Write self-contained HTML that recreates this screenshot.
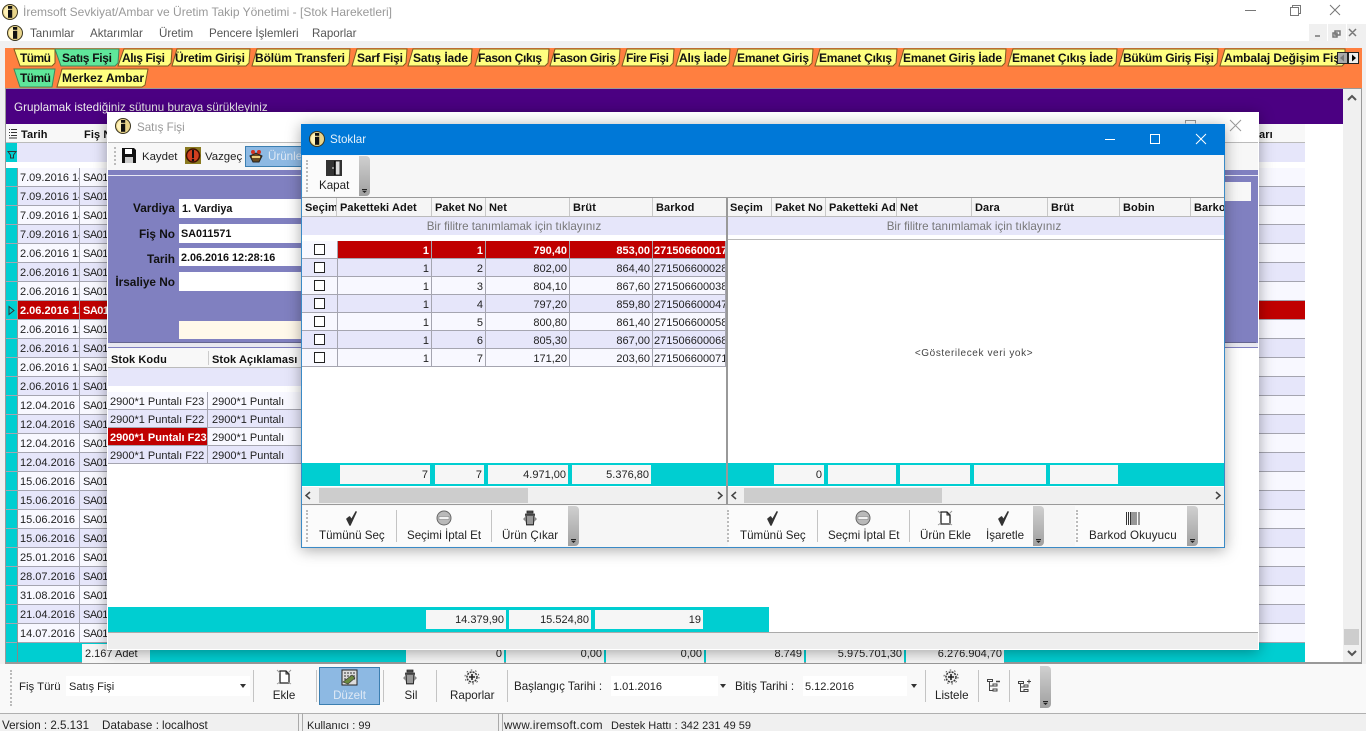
<!DOCTYPE html>
<html lang="tr"><head><meta charset="utf-8"><title>İremsoft</title>
<style>
html,body{margin:0;padding:0;width:1366px;height:731px;overflow:hidden;background:#fff}
body{position:relative;font:11.6px/14px "Liberation Sans",sans-serif;color:#222}
div,svg,span.t{position:absolute}
.t{white-space:nowrap;margin-top:1px}
.b{font-weight:bold;color:#111;font-size:11px;letter-spacing:.1px}
.lb{font-size:11.8px;letter-spacing:0}
.r{text-align:right}
.c{text-align:center}
.row{left:6px;width:1299px;height:18px;border-bottom:1px solid #a5a5b0;background:#f8f8ff;font-size:11px}
.sr{height:17px;border-bottom:1px solid #a5a5b0;background:#f8f8ff;line-height:20px;overflow:hidden;white-space:nowrap;font-size:11px}
.sr .t{margin-top:0}
.alt{background:#e6e6fa}
.red{background:#c00000;color:#fff;font-weight:bold}
.ind{left:0;top:0;width:11px;height:18px;background:#00ced1;border-right:1px solid #999}
.d{left:12px;top:0;height:18px;border-right:1px solid #a5a5b0;overflow:hidden;padding-left:2px;line-height:20px;width:59px;white-space:nowrap}
.f{left:75px;top:0;padding-left:2px;line-height:20px;white-space:nowrap;letter-spacing:-.5px}
.cell{top:0;height:17px;border-right:1px solid #a5a5b0;overflow:hidden;line-height:20px;white-space:nowrap;box-sizing:border-box}
.n{text-align:right;padding-right:2px}
.fld{background:#f6f6f6;height:19px;line-height:21px;text-align:right;box-sizing:border-box;padding-right:2px;font-size:11px}
.gh{top:0;height:18px;background:#f5f5f5;border-right:1px solid #c8c8c8;font-weight:bold;font-size:11px;color:#111;line-height:20px;padding-left:3px;box-sizing:border-box;overflow:hidden;white-space:nowrap;letter-spacing:.1px}
.sep{width:1px;background:#c4c4c4}
.grip{width:11px;background:linear-gradient(#d0d0d0,#a0a0a0);border-radius:0 4px 4px 0}
.grip:after{content:"";position:absolute;left:3px;bottom:3px;width:5px;height:4px;background:#222;clip-path:polygon(0 0,100% 0,100% 25%,0 25%,0 45%,100% 45%,50% 100%,0 45%)}
.dots{width:0;border-left:2px dotted #bbb}
.shot{box-shadow:0 2px 14px rgba(0,0,0,.35)}
.cb{left:12px;top:3px;width:9px;height:9px;border:1.5px solid #222;background:#fff}
.ff{left:179px;width:122px;background:#fff;box-sizing:border-box;font-size:10.8px;letter-spacing:0;white-space:nowrap}
</style></head><body>
<svg width="0" height="0" style="left:0;top:0"><defs>
<g id="logo"><circle cx="8" cy="8" r="7.5" fill="#e8d48a" stroke="#3a3520"/><path d="M2 8a6 6 0 0 1 6-6v12a6 6 0 0 1-6-6z" fill="#fff2b8"/><rect x="6" y="2" width="4.2" height="2.8" fill="#111"/><rect x="6" y="5.8" width="4.2" height="8" fill="#111"/></g>
<g id="chk"><path d="M3 8l3 6 6-13-4.5 8L5.5 6z" fill="#333" stroke="#333" stroke-width="1.6" stroke-linejoin="round"/></g>
<g id="stop"><circle cx="8" cy="8" r="7" fill="#b9b9b9" stroke="#666"/><rect x="3" y="6.5" width="10" height="3" fill="#f2f2f2" stroke="#777" stroke-width=".5"/></g>
<g id="trash"><path d="M5 1h6v2H5zM3.500 4h9l-1 11h-7z" fill="#555" stroke="#222" stroke-width=".8"/><path d="M6 6v8M8 6v8M10 6v8" stroke="#ddd"/><path d="M1 9l3-3v6zM15 9l-3-3v6z" fill="#888"/></g>
<g id="new"><path d="M4 2h6l3 3v9H4z" fill="#fff" stroke="#222" stroke-width="1.3"/><path d="M10 2v3h3" fill="none" stroke="#222"/><path d="M1 1l3 3M15 1l-3 3M1 15l3-2M15 15l-3-2" stroke="#999"/></g>
<g id="gear"><circle cx="8" cy="8" r="5" fill="#eee" stroke="#333" stroke-width="1.5" stroke-dasharray="2 1"/><path d="M8 5v6M5 8h6" stroke="#222" stroke-width="1.6"/><circle cx="8" cy="8" r="7" fill="none" stroke="#555" stroke-dasharray="1.5 3"/></g>
</defs></svg>

<!-- title bar -->
<svg style="left:2px;top:4px" width="16" height="16"><use href="#logo"/></svg>
<span class="t" style="left:23px;top:4px;color:#999;font-size:12px">İremsoft Sevkiyat/Ambar ve Üretim Takip Yönetimi - [Stok Hareketleri]</span>
<svg style="left:1240px;top:0" width="126" height="22" fill="none" stroke="#777"><path d="M5 10.5h11M50.500 7.500h8v8h-8zM52.500 7.500v-2h8v8h-2"/><path d="M90 5l10 10M100 5l-10 10"/></svg>
<!-- menu -->
<svg style="left:7px;top:25px" width="16" height="16"><use href="#logo"/></svg>
<span class="t" style="left:30px;top:26px;color:#555">Tanımlar</span>
<span class="t" style="left:90px;top:26px;color:#555">Aktarımlar</span>
<span class="t" style="left:159px;top:26px;color:#555">Üretim</span>
<span class="t" style="left:209px;top:26px;color:#555">Pencere İşlemleri</span>
<span class="t" style="left:312px;top:26px;color:#555">Raporlar</span>
<div style="left:1309px;top:24px;width:18px;height:17px;background:#f0f0f0"></div>
<div style="left:1328px;top:24px;width:18px;height:17px;background:#f0f0f0"></div>
<div style="left:1347px;top:24px;width:19px;height:17px;background:#f0f0f0"></div>
<svg style="left:1309px;top:24px" width="57" height="17" fill="none" stroke="#777" stroke-width="1.5"><path d="M6 12h5M26 7h5v4h-5zM24 9h4v4h-4zM40 5l7 7M47 5l-7 7"/></svg>
<div style="left:0;top:41px;width:1366px;height:7px;background:#f0f0f0"></div>
<div style="left:0;top:48px;width:5px;height:616px;background:#f0f0f0"></div>
<div style="left:1362px;top:48px;width:4px;height:616px;background:#f0f0f0"></div>

<!-- tab strip -->
<div style="left:5px;top:48px;width:1357px;height:41px;background:#ff7f40;border-bottom:1px solid #999;box-sizing:border-box"></div>
<svg style="left:0;top:48px" width="1366" height="42" font-family="Liberation Sans" font-size="12" font-weight="bold" fill="#111">
<g stroke="#7a5a20" fill="#ffff80">
<polygon points="14,1 55,1 55,15 52,18 20,18"/>
<polygon points="55,1 119,1 118,15 115,18 61,18" fill="#5fe79a" stroke="#3e8a5e"/>
<polygon points="124,1 172,1 171,15 168,18 118,18"/>
<polygon points="177,1 250,1 249,15 246,18 172,18"/>
<polygon points="257,1 350,1 349,15 346,18 252,18"/>
<polygon points="357,1 407,1 406,15 403,18 352,18"/>
<polygon points="413,1 472,1 471,15 468,18 408,18"/>
<polygon points="480,1 549,1 548,15 545,18 475,18"/>
<polygon points="555,1 620,1 619,15 616,18 550,18"/>
<polygon points="627,1 674,1 673,15 670,18 622,18"/>
<polygon points="681,1 730,1 729,15 726,18 676,18"/>
<polygon points="738,1 813,1 812,15 809,18 733,18"/>
<polygon points="820,1 897,1 896,15 893,18 815,18"/>
<polygon points="904,1 1006,1 1005,15 1002,18 899,18"/>
<polygon points="1013,1 1117,1 1116,15 1113,18 1008,18"/>
<polygon points="1124,1 1218,1 1217,15 1214,18 1119,18"/>
<polygon points="1225,1 1345,1 1345,15 1342,18 1220,18"/>
<polygon points="14,21 55,21 52,39 20,39" fill="#5fe79a" stroke="#3e8a5e"/>
<polygon points="62,21 148,21 145,37 142,39 57,39"/>
</g>
<text x="20" y="14" textLength="31">Tümü</text>
<text x="62" y="14" textLength="50">Satış Fişi</text>
<text x="122" y="14" textLength="43">Alış Fişi</text>
<text x="175" y="14" textLength="70">Üretim Girişi</text>
<text x="255" y="14" textLength="90">Bölüm Transferi</text>
<text x="357" y="14" textLength="46">Sarf Fişi</text>
<text x="413" y="14" textLength="55">Satış İade</text>
<text x="478" y="14" textLength="64">Fason Çıkış</text>
<text x="553" y="14" textLength="63">Fason Giriş</text>
<text x="626" y="14" textLength="43">Fire Fişi</text>
<text x="679" y="14" textLength="48">Alış İade</text>
<text x="737" y="14" textLength="72">Emanet Giriş</text>
<text x="819" y="14" textLength="73">Emanet Çıkış</text>
<text x="903" y="14" textLength="99">Emanet Giriş İade</text>
<text x="1012" y="14" textLength="101">Emanet Çıkış İade</text>
<text x="1123" y="14" textLength="91">Büküm Giriş Fişi</text>
<text x="1224" y="14" textLength="116">Ambalaj Değişim Fiş</text>
<text x="20" y="34" textLength="31">Tümü</text>
<text x="62" y="34" textLength="82">Merkez Ambar</text>
<rect x="1337.5" y="4.5" width="10" height="11" fill="#aaa" stroke="#222"/><path d="M1340 10l4-3.500v7z" fill="#777"/>
<rect x="1348.5" y="4.500" width="10" height="11" fill="#eee" stroke="#222"/><path d="M1356 10l-4-3.500v7z" fill="#000"/>
</svg>

<!-- main grid area -->
<div style="left:5px;top:89px;width:1357px;height:575px;background:#fff;border-right:1px solid #999;border-left:1px solid #999;border-bottom:2px solid #999;box-sizing:border-box"></div>
<div style="left:6px;top:89px;width:1337px;height:35px;background:#4b0082"></div>
<span class="t" style="left:14px;top:100px;color:#eee;letter-spacing:.05px">Gruplamak istediğiniz sütunu buraya sürükleyiniz</span>
<div style="left:1343px;top:89px;width:18px;height:573px;background:#f0f0f0"></div>
<div style="left:1344px;top:629px;width:15px;height:16px;background:#cdcdcd"></div>
<svg style="left:1343px;top:89px" width="18" height="573" fill="none" stroke="#555" stroke-width="2"><path d="M5 11l4-4 4 4M5 562l4 4 4-4"/></svg>
<div style="left:6px;top:124px;width:1299px;height:19px;background:#f8f8f8;border-bottom:1px solid #bbb;box-sizing:border-box"></div>
<span class="t b" style="left:21px;top:127px">Tarih</span>
<span class="t b" style="left:84px;top:127px">Fiş N</span>
<svg style="left:8px;top:128px" width="9" height="11" stroke="#333"><path d="M1 1.500h1M1 4.500h1M1 7.500h1M3 1.500h6M3 4.500h6M3 7.500h6M1 10h8"/></svg>
<span class="t b" style="left:1259px;top:127px">arı</span>
<div style="left:6px;top:143px;width:1299px;height:19px;background:#e6e6fa"></div>
<div style="left:6px;top:143px;width:11px;height:19px;background:#00ced1"></div>
<svg style="left:7px;top:150px" width="10" height="11" fill="none" stroke="#333"><path d="M1 1.500h8L6.500 5v3h-3V5z"/></svg>

<div class="row" style="top:168px"><div class="ind"></div><div class="d">7.09.2016 14</div><div class="f">SA01</div></div>
<div class="row alt" style="top:187px"><div class="ind"></div><div class="d">7.09.2016 14</div><div class="f">SA01</div></div>
<div class="row" style="top:206px"><div class="ind"></div><div class="d">7.09.2016 14</div><div class="f">SA01</div></div>
<div class="row alt" style="top:225px"><div class="ind"></div><div class="d">7.09.2016 14</div><div class="f">SA01</div></div>
<div class="row" style="top:244px"><div class="ind"></div><div class="d">2.06.2016 12</div><div class="f">SA01</div></div>
<div class="row alt" style="top:263px"><div class="ind"></div><div class="d">2.06.2016 12</div><div class="f">SA01</div></div>
<div class="row" style="top:282px"><div class="ind"></div><div class="d">2.06.2016 12</div><div class="f">SA01</div></div>
<div class="row red" style="top:301px"><div class="ind"></div><div class="d">2.06.2016 12</div><div class="f">SA01</div></div>
<div class="row" style="top:320px"><div class="ind"></div><div class="d">2.06.2016 12</div><div class="f">SA01</div></div>
<div class="row alt" style="top:339px"><div class="ind"></div><div class="d">2.06.2016 12</div><div class="f">SA01</div></div>
<div class="row" style="top:358px"><div class="ind"></div><div class="d">2.06.2016 12</div><div class="f">SA01</div></div>
<div class="row alt" style="top:377px"><div class="ind"></div><div class="d">2.06.2016 12</div><div class="f">SA01</div></div>
<div class="row" style="top:396px"><div class="ind"></div><div class="d">12.04.2016</div><div class="f">SA01</div></div>
<div class="row alt" style="top:415px"><div class="ind"></div><div class="d">12.04.2016</div><div class="f">SA01</div></div>
<div class="row" style="top:434px"><div class="ind"></div><div class="d">12.04.2016</div><div class="f">SA01</div></div>
<div class="row alt" style="top:453px"><div class="ind"></div><div class="d">12.04.2016</div><div class="f">SA01</div></div>
<div class="row" style="top:472px"><div class="ind"></div><div class="d">15.06.2016</div><div class="f">SA01</div></div>
<div class="row alt" style="top:491px"><div class="ind"></div><div class="d">15.06.2016</div><div class="f">SA01</div></div>
<div class="row" style="top:510px"><div class="ind"></div><div class="d">15.06.2016</div><div class="f">SA01</div></div>
<div class="row alt" style="top:529px"><div class="ind"></div><div class="d">15.06.2016</div><div class="f">SA01</div></div>
<div class="row" style="top:548px"><div class="ind"></div><div class="d">25.01.2016</div><div class="f">SA01</div></div>
<div class="row alt" style="top:567px"><div class="ind"></div><div class="d">28.07.2016</div><div class="f">SA01</div></div>
<div class="row" style="top:586px"><div class="ind"></div><div class="d">31.08.2016</div><div class="f">SA01</div></div>
<div class="row alt" style="top:605px"><div class="ind"></div><div class="d">21.04.2016</div><div class="f">SA01</div></div>
<div class="row" style="top:624px"><div class="ind"></div><div class="d">14.07.2016</div><div class="f">SA01</div></div>
<svg style="left:7px;top:305px" width="9" height="11" fill="none" stroke="#333"><path d="M2 1.500l5 4-5 4z"/></svg>
<div style="left:1258px;top:168px;width:1px;height:474px;background:#a5a5b0"></div>

<!-- main footer -->
<div style="left:6px;top:643px;width:1299px;height:19px;background:#00ced1"></div>
<div style="left:17px;top:642px;width:1px;height:20px;background:#888"></div>
<div class="fld" style="left:82px;top:644px;width:68px;text-align:left;padding-left:3px">2.167 Adet</div>
<div class="fld" style="left:406px;top:644px;width:98px">0</div>
<div class="fld" style="left:506px;top:644px;width:98px">0,00</div>
<div class="fld" style="left:606px;top:644px;width:98px">0,00</div>
<div class="fld" style="left:706px;top:644px;width:98px">8.749</div>
<div class="fld" style="left:806px;top:644px;width:98px">5.975.701,30</div>
<div class="fld" style="left:906px;top:644px;width:98px">6.276.904,70</div>

<!-- Satış Fişi window -->
<div class="shot" style="left:107px;top:112px;width:1152px;height:538px;background:#fff"></div>
<svg style="left:115px;top:118px" width="16" height="16"><use href="#logo"/></svg>
<span class="t" style="left:137px;top:120px;color:#999">Satış Fişi</span>
<svg style="left:1180px;top:115px" width="70" height="22" fill="none" stroke="#999"><path d="M5.500 8.500v-3h10v3"/><path d="M50 5l11 11M61 5L50 16"/></svg>
<div style="left:108px;top:142px;width:1150px;height:1px;background:#bbb"></div>
<div style="left:108px;top:143px;width:1150px;height:27px;background:#f7f7f7"></div>
<div class="dots" style="left:114px;top:147px;height:18px"></div>
<svg style="left:121px;top:147px" width="16" height="17"><path d="M1 1h12l2 2v13H1z" fill="#111"/><rect x="4" y="2" width="7" height="5" fill="#fff"/><rect x="4" y="10" width="8" height="6" fill="#ccc"/></svg>
<span class="t" style="left:142px;top:149px;font-size:11.4px">Kaydet</span>
<svg style="left:185px;top:147px" width="16" height="17"><rect width="16" height="17" fill="#8a7a20"/><circle cx="8" cy="8.500" r="6.500" fill="#d04020" stroke="#401000" stroke-width="1.500"/><path d="M8 3v8" stroke="#111" stroke-width="2"/><circle cx="8" cy="13" r="1.300" fill="#111"/></svg>
<span class="t" style="left:205px;top:149px;font-size:11.4px">Vazgeç</span>
<div style="left:245px;top:146px;width:60px;height:21px;background:#8db9e3;border:1px solid #3c7fb1;box-sizing:border-box"></div>
<svg style="left:248px;top:148px" width="16" height="16"><path d="M2 8l6-3 6 3-3 6H5z" fill="#6a4a20" stroke="#222"/><circle cx="5" cy="4" r="2" fill="#d03020"/><circle cx="11" cy="4" r="2" fill="#d03020"/><path d="M4 8h8v2H4z" fill="#eed080"/></svg>
<span class="t" style="left:268px;top:149px;color:#dfe9f5">Ürünler</span>
<div style="left:108px;top:170px;width:1150px;height:178px;background:#8080c0"></div>
<div style="left:108px;top:175px;width:1150px;height:1px;background:#e8e8f4"></div>
<div style="left:110px;top:342px;width:1146px;height:1px;background:#666690"></div>
<div style="left:108px;top:343px;width:1150px;height:4px;background:#e8e8f0"></div>
<span class="t b lb r" style="left:115px;top:200px;width:60px">Vardiya</span>
<span class="t b lb r" style="left:115px;top:226px;width:60px">Fiş No</span>
<span class="t b lb r" style="left:115px;top:251px;width:60px">Tarih</span>
<span class="t b lb r" style="left:105px;top:274px;width:70px">İrsaliye No</span>
<div class="b ff" style="top:199px;height:19px;line-height:21px;padding-left:3px">1. Vardiya</div>
<div class="b ff" style="top:224px;height:19px;line-height:21px;padding-left:2px">SA011571</div>
<div class="b ff" style="top:248px;height:18px;line-height:20px;padding-left:2px">2.06.2016 12:28:16</div>
<div style="left:179px;top:272px;width:122px;height:19px;background:#fff"></div>
<div style="left:179px;top:321px;width:122px;height:18px;background:#fff8ea"></div>
<div style="left:1225px;top:182px;width:26px;height:19px;background:#f8f8f8"></div>

<div style="left:108px;top:348px;width:193px;height:20px;background:#f8f8f8;border-bottom:1px solid #bbb;box-sizing:border-box"></div>
<span class="t b" style="left:111px;top:352px">Stok Kodu</span>
<div style="left:208px;top:351px;width:1px;height:14px;background:#ccc"></div>
<span class="t b" style="left:212px;top:352px">Stok Açıklaması</span>
<div style="left:108px;top:368px;width:193px;height:18px;background:#e6e6fa"></div>
<div class="sr" style="left:108px;top:392px;width:193px"><div class="cell" style="left:0;width:100px;padding-left:2px">2900*1 Puntalı F23</div><span class="t" style="left:104px">2900*1 Puntalı</span></div>
<div class="sr alt" style="left:108px;top:410px;width:193px"><div class="cell" style="left:0;width:100px;padding-left:2px">2900*1 Puntalı F22</div><span class="t" style="left:104px">2900*1 Puntalı</span></div>
<div class="sr" style="left:108px;top:428px;width:193px"><div class="cell red" style="left:0;width:100px;padding-left:2px">2900*1 Puntalı F23</div><span class="t" style="left:104px">2900*1 Puntalı</span></div>
<div class="sr alt" style="left:108px;top:446px;width:193px"><div class="cell" style="left:0;width:100px;padding-left:2px">2900*1 Puntalı F22</div><span class="t" style="left:104px">2900*1 Puntalı</span></div>

<div style="left:108px;top:607px;width:661px;height:25px;background:#00ced1"></div>
<div class="fld" style="left:426px;top:610px;width:80px">14.379,90</div>
<div class="fld" style="left:509px;top:610px;width:82px">15.524,80</div>
<div class="fld" style="left:595px;top:610px;width:108px">19</div>
<div style="left:108px;top:632px;width:1150px;height:1px;background:#aaa"></div>
<div style="left:108px;top:633px;width:1150px;height:16px;background:#eeeeee"></div>

<!-- Stoklar window -->
<div class="shot" style="left:301px;top:124px;width:924px;height:424px;background:#fff;border:1px solid #3a8ac6;box-sizing:border-box"></div>
<div style="left:301px;top:124px;width:924px;height:31px;background:#0078d7"></div>
<svg style="left:309px;top:131px" width="16" height="16"><use href="#logo"/></svg>
<span class="t" style="left:330px;top:132px;color:#e6f2fb">Stoklar</span>
<svg style="left:1100px;top:130px" width="115" height="18" fill="none" stroke="#fff"><path d="M5 9.500h10M50.500 4.500h9v9h-9zM96 4l10 10M106 4L96 14"/></svg>
<div style="left:302px;top:155px;width:922px;height:42px;background:#f6f6f6"></div>
<div style="left:303px;top:156px;width:56px;height:40px;background:#fbfbfb"></div>
<div class="dots" style="left:306px;top:160px;height:32px"></div>
<svg style="left:326px;top:160px" width="16" height="16"><rect width="16" height="16" fill="#333"/><rect x="9" y="1.500" width="4.500" height="13" fill="#ddd"/><path d="M9 1v14" stroke="#000" stroke-width="1.500"/><path d="M7 7v2" stroke="#eee"/></svg>
<span class="t" style="left:319px;top:178px">Kapat</span>
<div class="grip" style="left:359px;top:156px;height:40px"></div>

<!-- Stoklar grid headers -->
<div style="left:302px;top:197px;width:922px;height:1px;background:#999"></div>
<div style="left:302px;top:198px;width:922px;height:18px">
<div class="gh" style="left:0;width:35px">Seçim</div>
<div class="gh" style="left:35px;width:95px">Paketteki Adet</div>
<div class="gh" style="left:130px;width:54px">Paket No</div>
<div class="gh" style="left:184px;width:84px">Net</div>
<div class="gh" style="left:268px;width:83px">Brüt</div>
<div class="gh" style="left:351px;width:73px;border:0">Barkod</div>
<div class="gh" style="left:425px;width:45px">Seçim</div>
<div class="gh" style="left:470px;width:54px">Paket No</div>
<div class="gh" style="left:524px;width:71px">Paketteki Ad</div>
<div class="gh" style="left:595px;width:75px">Net</div>
<div class="gh" style="left:670px;width:76px">Dara</div>
<div class="gh" style="left:746px;width:72px">Brüt</div>
<div class="gh" style="left:818px;width:71px">Bobin</div>
<div class="gh" style="left:889px;width:33px;border:0">Barko</div>
</div>
<div style="left:302px;top:216px;width:922px;height:1px;background:#bbb"></div>
<div class="c" style="left:302px;top:217px;width:424px;height:18px;background:#e6e6fa;color:#777;line-height:20px">Bir filitre tanımlamak için tıklayınız</div>
<div style="left:728px;top:217px;width:496px;height:18px;background:#e6e6fa"></div>
<div class="c" style="left:728px;top:217px;width:492px;height:18px;color:#777;line-height:20px">Bir filitre tanımlamak için tıklayınız</div>
<div style="left:726px;top:198px;width:2px;height:306px;background:#999"></div>
<div style="left:728px;top:239px;width:496px;height:1px;background:#bbb"></div>

<!-- left rows -->
<div class="sr" style="left:302px;top:241px;width:424px"><div class="cell" style="left:0;width:36px"><div class="cb"></div></div><div class="cell n red" style="left:36px;width:94px">1</div><div class="cell n red" style="left:130px;width:54px">1</div><div class="cell n red" style="left:184px;width:84px">790,40</div><div class="cell n red" style="left:268px;width:83px">853,00</div><div class="cell red" style="left:351px;width:73px;padding-left:1px">271506600017</div></div>
<div class="sr alt" style="left:302px;top:259px;width:424px"><div class="cell" style="left:0;width:36px"><div class="cb"></div></div><div class="cell n" style="left:36px;width:94px">1</div><div class="cell n" style="left:130px;width:54px">2</div><div class="cell n" style="left:184px;width:84px">802,00</div><div class="cell n" style="left:268px;width:83px">864,40</div><div class="cell" style="left:351px;width:73px;padding-left:1px">271506600028</div></div>
<div class="sr" style="left:302px;top:277px;width:424px"><div class="cell" style="left:0;width:36px"><div class="cb"></div></div><div class="cell n" style="left:36px;width:94px">1</div><div class="cell n" style="left:130px;width:54px">3</div><div class="cell n" style="left:184px;width:84px">804,10</div><div class="cell n" style="left:268px;width:83px">867,60</div><div class="cell" style="left:351px;width:73px;padding-left:1px">271506600038</div></div>
<div class="sr alt" style="left:302px;top:295px;width:424px"><div class="cell" style="left:0;width:36px"><div class="cb"></div></div><div class="cell n" style="left:36px;width:94px">1</div><div class="cell n" style="left:130px;width:54px">4</div><div class="cell n" style="left:184px;width:84px">797,20</div><div class="cell n" style="left:268px;width:83px">859,80</div><div class="cell" style="left:351px;width:73px;padding-left:1px">271506600047</div></div>
<div class="sr" style="left:302px;top:313px;width:424px"><div class="cell" style="left:0;width:36px"><div class="cb"></div></div><div class="cell n" style="left:36px;width:94px">1</div><div class="cell n" style="left:130px;width:54px">5</div><div class="cell n" style="left:184px;width:84px">800,80</div><div class="cell n" style="left:268px;width:83px">861,40</div><div class="cell" style="left:351px;width:73px;padding-left:1px">271506600058</div></div>
<div class="sr alt" style="left:302px;top:331px;width:424px"><div class="cell" style="left:0;width:36px"><div class="cb"></div></div><div class="cell n" style="left:36px;width:94px">1</div><div class="cell n" style="left:130px;width:54px">6</div><div class="cell n" style="left:184px;width:84px">805,30</div><div class="cell n" style="left:268px;width:83px">867,00</div><div class="cell" style="left:351px;width:73px;padding-left:1px">271506600068</div></div>
<div class="sr" style="left:302px;top:349px;width:424px"><div class="cell" style="left:0;width:36px"><div class="cb"></div></div><div class="cell n" style="left:36px;width:94px">1</div><div class="cell n" style="left:130px;width:54px">7</div><div class="cell n" style="left:184px;width:84px">171,20</div><div class="cell n" style="left:268px;width:83px">203,60</div><div class="cell" style="left:351px;width:73px;padding-left:1px">271506600071</div></div>

<span class="t c" style="left:728px;top:346px;width:492px;font-size:10px;color:#444;letter-spacing:.6px">&lt;Gösterilecek veri yok&gt;</span>

<!-- Stoklar footers -->
<div style="left:302px;top:463px;width:424px;height:23px;background:#00ced1"></div>
<div style="left:728px;top:463px;width:496px;height:23px;background:#00ced1"></div>
<div class="fld" style="left:340px;top:465px;width:90px">7</div>
<div class="fld" style="left:435px;top:465px;width:49px">7</div>
<div class="fld" style="left:488px;top:465px;width:80px">4.971,00</div>
<div class="fld" style="left:572px;top:465px;width:79px">5.376,80</div>
<div class="fld" style="left:774px;top:465px;width:50px">0</div>
<div class="fld" style="left:828px;top:465px;width:68px"></div>
<div class="fld" style="left:900px;top:465px;width:70px"></div>
<div class="fld" style="left:974px;top:465px;width:72px"></div>
<div class="fld" style="left:1050px;top:465px;width:68px"></div>
<!-- scrollbars -->
<div style="left:302px;top:487px;width:424px;height:17px;background:#f0f0f0"></div>
<div style="left:728px;top:487px;width:496px;height:17px;background:#f0f0f0"></div>
<div style="left:319px;top:488px;width:209px;height:15px;background:#cdcdcd"></div>
<div style="left:744px;top:488px;width:198px;height:15px;background:#cdcdcd"></div>
<svg style="left:302px;top:487px" width="922" height="17" fill="none" stroke="#444" stroke-width="1.500"><path d="M8 5l-4 3.500 4 3.500M416 5l4 3.500-4 3.500M434 5l-4 3.500 4 3.500M914 5l4 3.500-4 3.500"/></svg>
<div style="left:302px;top:504px;width:922px;height:1px;background:#999"></div>
<!-- Stoklar bottom toolbar -->
<div style="left:302px;top:505px;width:922px;height:42px;background:#f6f6f6"></div>
<div style="left:303px;top:506px;width:265px;height:40px;background:#fbfbfb"></div>
<div style="left:728px;top:506px;width:305px;height:40px;background:#fbfbfb"></div>
<div style="left:1075px;top:506px;width:112px;height:40px;background:#fbfbfb"></div>
<div class="dots" style="left:306px;top:510px;height:32px"></div>
<svg style="left:344px;top:511px" width="16" height="16"><use href="#chk"/></svg>
<span class="t" style="left:319px;top:528px">Tümünü Seç</span>
<div class="sep" style="left:396px;top:510px;height:32px"></div>
<svg style="left:436px;top:510px" width="16" height="16"><use href="#stop"/></svg>
<span class="t" style="left:407px;top:528px">Seçimi İptal Et</span>
<div class="sep" style="left:491px;top:510px;height:32px"></div>
<svg style="left:522px;top:510px" width="16" height="16"><use href="#trash"/></svg>
<span class="t" style="left:502px;top:528px">Ürün Çıkar</span>
<div class="grip" style="left:568px;top:506px;height:40px"></div>
<div class="dots" style="left:727px;top:510px;height:32px"></div>
<svg style="left:765px;top:511px" width="16" height="16"><use href="#chk"/></svg>
<span class="t" style="left:740px;top:528px">Tümünü Seç</span>
<div class="sep" style="left:817px;top:510px;height:32px"></div>
<svg style="left:855px;top:510px" width="16" height="16"><use href="#stop"/></svg>
<span class="t" style="left:828px;top:528px">Seçmi İptal Et</span>
<div class="sep" style="left:909px;top:510px;height:32px"></div>
<svg style="left:937px;top:510px" width="16" height="16"><use href="#new"/></svg>
<span class="t" style="left:920px;top:528px">Ürün Ekle</span>
<svg style="left:996px;top:511px" width="16" height="16"><use href="#chk"/></svg>
<span class="t" style="left:986px;top:528px">İşaretle</span>
<div class="grip" style="left:1033px;top:506px;height:40px"></div>
<div class="dots" style="left:1076px;top:510px;height:32px"></div>
<svg style="left:1125px;top:511px" width="16" height="16" stroke="#333"><path d="M1.500 1v13M3.500 1v13M5.500 1v13M7 1v13M9 1v13M11 1v13M14 1v13" stroke-width="1"/></svg>
<span class="t" style="left:1089px;top:528px;letter-spacing:.15px">Barkod Okuyucu</span>
<div class="grip" style="left:1187px;top:506px;height:40px"></div>

<!-- bottom toolbar -->
<div style="left:0;top:664px;width:1366px;height:49px;background:#f9f9f9"></div>
<div class="dots" style="left:10px;top:670px;height:36px"></div>
<span class="t" style="left:19px;top:679px;font-size:11.4px">Fiş Türü</span>
<div style="left:66px;top:676px;width:184px;height:20px;background:#fff"></div>
<span class="t" style="left:69px;top:679px;font-size:11px">Satış Fişi</span>
<svg style="left:239px;top:684px" width="8" height="5"><path d="M1 0h6L4 4z" fill="#333"/></svg>
<div class="sep" style="left:253px;top:670px;height:32px"></div>
<svg style="left:276px;top:669px" width="16" height="16"><use href="#new"/></svg>
<span class="t c" style="left:264px;top:688px;width:40px">Ekle</span>
<div class="sep" style="left:316px;top:670px;height:32px"></div>
<div style="left:319px;top:667px;width:61px;height:38px;background:#8db9e3;border:1px solid #3c7fb1;box-sizing:border-box"></div>
<svg style="left:341px;top:669px" width="17" height="17"><rect x="1" y="1" width="15" height="15" fill="#ddd" stroke="#222"/><path d="M3 4h11M3 7h11M3 10h11" stroke="#333" stroke-dasharray="2 1"/><path d="M2 13l9-7 3 3-7 6z" fill="#6a8a40" stroke="#333" stroke-width=".6"/></svg>
<span class="t c" style="left:319px;top:688px;width:61px;color:#dfe9f5">Düzelt</span>
<div class="sep" style="left:383px;top:670px;height:32px"></div>
<svg style="left:402px;top:669px" width="16" height="16"><use href="#trash"/></svg>
<span class="t c" style="left:391px;top:688px;width:40px">Sil</span>
<div class="sep" style="left:436px;top:670px;height:32px"></div>
<svg style="left:464px;top:669px" width="16" height="16"><use href="#gear"/></svg>
<span class="t" style="left:450px;top:688px">Raporlar</span>
<div class="sep" style="left:507px;top:670px;height:32px"></div>
<span class="t" style="left:514px;top:679px">Başlangıç Tarihi :</span>
<div style="left:611px;top:676px;width:107px;height:20px;background:#fff"></div>
<span class="t" style="left:613px;top:679px;font-size:11px">1.01.2016</span>
<svg style="left:719px;top:684px" width="8" height="5"><path d="M1 0h6L4 4z" fill="#333"/></svg>
<span class="t" style="left:735px;top:679px">Bitiş Tarihi :</span>
<div style="left:803px;top:676px;width:104px;height:20px;background:#fff"></div>
<span class="t" style="left:805px;top:679px;font-size:11px">5.12.2016</span>
<svg style="left:910px;top:684px" width="8" height="5"><path d="M1 0h6L4 4z" fill="#333"/></svg>
<div class="sep" style="left:925px;top:670px;height:32px"></div>
<svg style="left:943px;top:669px" width="16" height="16"><use href="#gear"/></svg>
<span class="t" style="left:935px;top:688px">Listele</span>
<div class="sep" style="left:978px;top:670px;height:32px"></div>
<svg style="left:986px;top:678px" width="15" height="15" fill="none" stroke="#444"><path d="M1.500 1.500h5v2h-5zM3.500 3.500v9h3M3.500 8h3M7 6h4v2H7zM7 11h4v2H7z"/><path d="M10 3.500h4" stroke-width="1.500"/></svg>
<div class="sep" style="left:1009px;top:670px;height:32px"></div>
<svg style="left:1017px;top:678px" width="15" height="15" fill="none" stroke="#444"><path d="M1.500 3.500h5v2h-5zM3.500 5.500v8h3M3.500 9h3M7 7h4v2H7zM7 11.500h4v2H7z"/><path d="M10 3.500h4M12 1.500v4"/></svg>
<div class="grip" style="left:1040px;top:666px;height:42px"></div>

<!-- status bar -->
<div style="left:0;top:713px;width:1366px;height:18px;background:#f0f0f0;border-top:1px solid #b0b0b0;box-sizing:border-box"></div>
<div style="left:298px;top:713px;width:1px;height:18px;background:#aaa"></div>
<div style="left:302px;top:713px;width:1px;height:18px;background:#aaa"></div>
<div style="left:498px;top:713px;width:1px;height:18px;background:#aaa"></div>
<div style="left:502px;top:713px;width:1px;height:18px;background:#aaa"></div>
<span class="t" style="left:2px;top:718px">Version : 2.5.131</span>
<span class="t" style="left:102px;top:718px;letter-spacing:.1px">Database :</span>
<span class="t" style="left:162px;top:718px">localhost</span>
<span class="t" style="left:307px;top:718px;font-size:11px">Kullanıcı : 99</span>
<span class="t" style="left:504px;top:718px;letter-spacing:.3px">www.iremsoft.com</span>
<span class="t" style="left:611px;top:718px;font-size:11px">Destek Hattı : 342 231 49 59</span>
</body></html>
